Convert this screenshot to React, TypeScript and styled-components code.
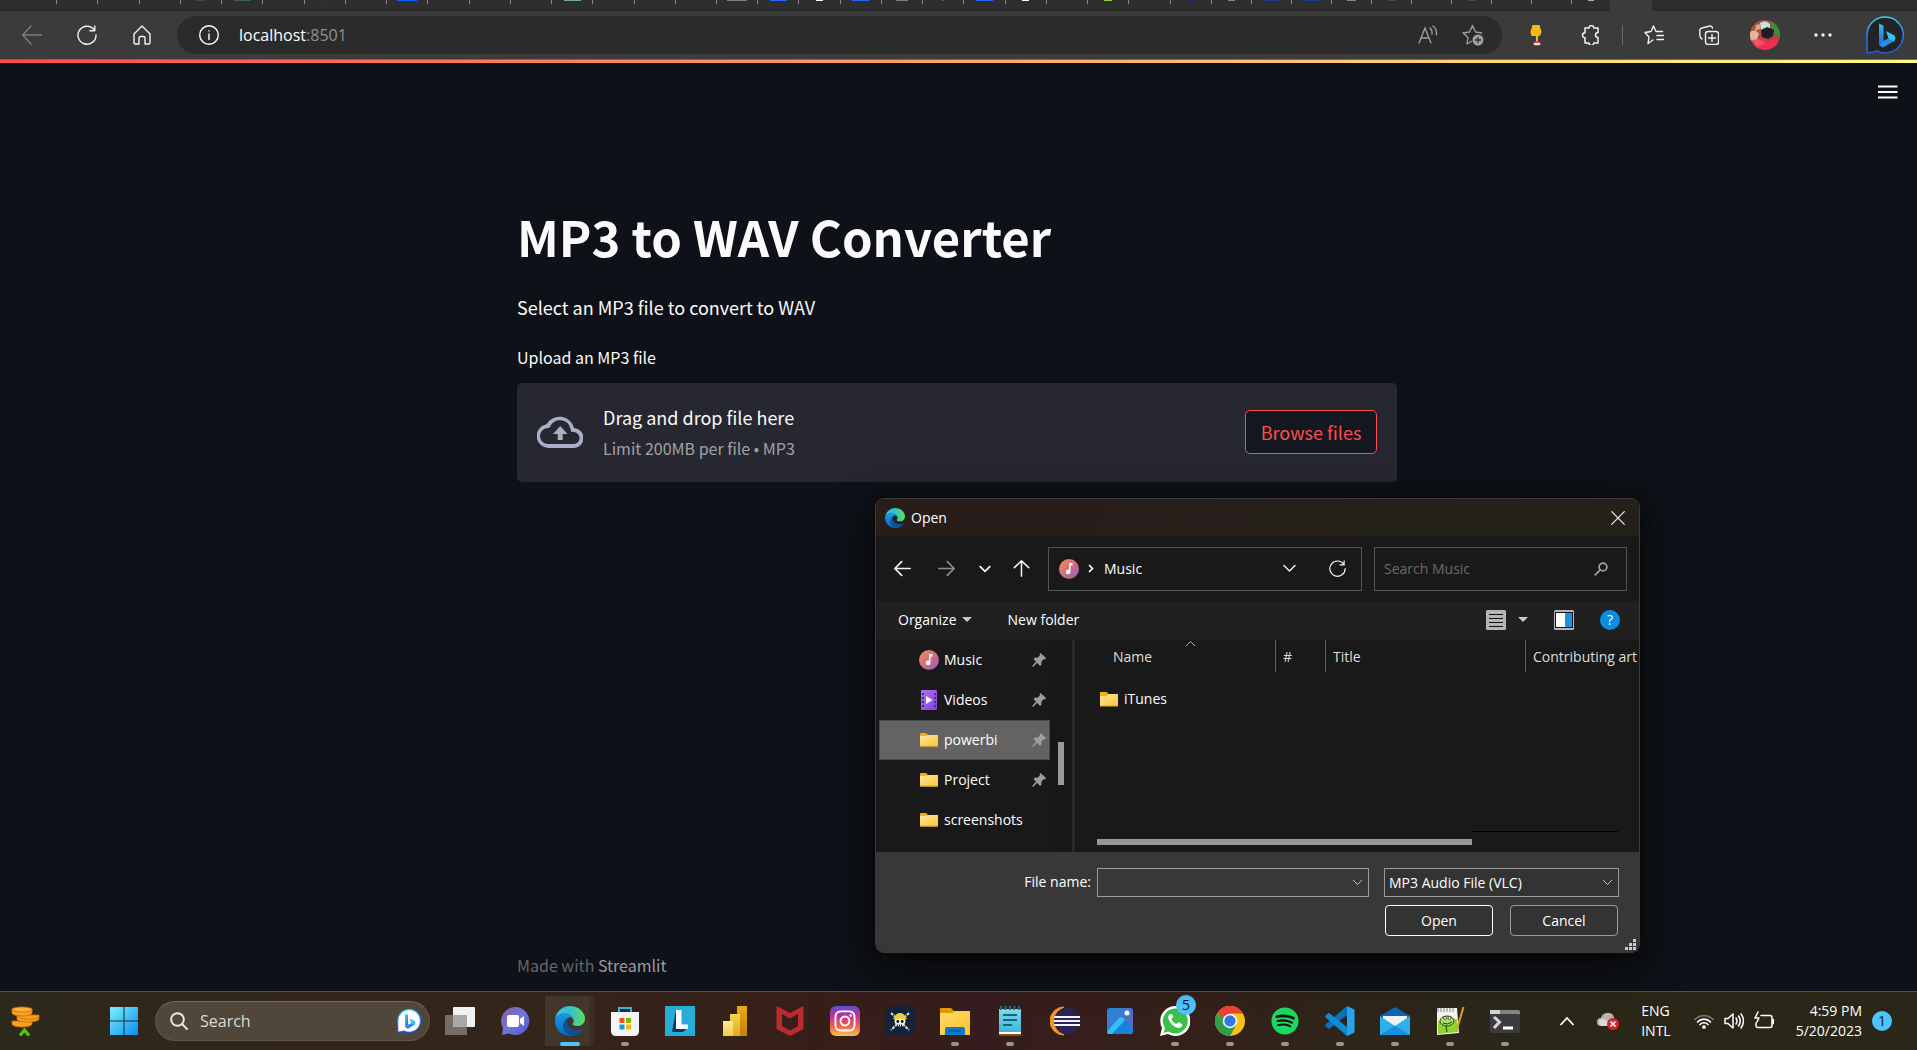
import React from "react";
import styled, { createGlobalStyle } from "styled-components";
import { FaInstagram, FaSpotify, FaWhatsapp } from "react-icons/fa";

const ui = `"Segoe UI", "Open Sans", "Noto Sans", sans-serif`;
const source = `"Noto Sans CJK JP", "Noto Sans CJK SC", "Open Sans", sans-serif`;

const GlobalStyle = createGlobalStyle`
  *, *::before, *::after { box-sizing: border-box; }
  body { margin: 0; background: #0e1117; font-family: ${ui}; color: #fff; }
  button, input, select { font: inherit; color: inherit; margin: 0; }
  svg { display: block; flex: none; }
`;

const Desktop = styled.div`
  position: relative;
  display: flex;
  flex-direction: column;
  min-height: 100vh;
  overflow: hidden;
`;

const Defs = styled.svg`
  position: absolute;
  width: 0;
  height: 0;
`;

/* ---------- browser chrome ---------- */

const TabStrip = styled.div`
  display: flex;
  height: 11px;
  background: #3b3b3b;
`;

const TabGroup = styled.div<{ $grow?: boolean; $radius?: string }>`
  display: flex;
  flex: ${(p) => (p.$grow ? "1" : "none")};
  background: #2e2e2e;
  border-bottom: 1px solid #272727;
  border-radius: ${(p) => p.$radius ?? "0"};
`;

const FirstGroup = styled(TabGroup)`
  padding-left: 16px;
`;

const Tab = styled.div<{ $width?: number; $last?: boolean }>`
  display: flex;
  justify-content: center;
  flex: ${(p) => (p.$width ? `0 0 ${p.$width}px` : "1")};
  &::after {
    content: "";
    width: ${(p) => (p.$last ? 0 : 1)}px;
    height: 4px;
    margin-left: auto;
    background: #858585;
  }
`;

const Favicon = styled.span<{ $color: string; $width: number }>`
  width: ${(p) => p.$width}px;
  height: 1px;
  margin-left: auto;
  background: ${(p) => p.$color};
`;

const ActiveTab = styled.div`
  width: 42px;
`;

const RestOfStrip = styled(TabGroup)`
  width: 265px;
`;

const Toolbar = styled.header`
  display: flex;
  align-items: center;
  height: 49px;
  padding-left: 4px;
  background: #3b3b3b;
  border-bottom: 1px solid #6b6b6b;
`;

const IconButton = styled.button<{ $width?: number; $color?: string }>`
  display: flex;
  align-items: center;
  justify-content: center;
  width: ${(p) => p.$width ?? 55}px;
  height: 38px;
  padding: 0;
  border: 0;
  background: none;
  color: ${(p) => p.$color ?? "#f2f2f2"};
`;

const AddressPill = styled.div`
  display: flex;
  align-items: center;
  flex: 1;
  height: 38px;
  margin: 0 6px 0 8px;
  padding: 0 7px 0 22px;
  gap: 20px;
  border-radius: 19px;
  background: #2b2b2b;
  font-size: 16px;
`;

const Url = styled.div`
  flex: 1;
  color: #fff;
`;

const Port = styled.span`
  color: #8f8f8f;
`;

const PillActions = styled.div`
  display: flex;
`;

const Divider = styled.div`
  display: flex;
  justify-content: center;
  width: 8px;
  &::before {
    content: "";
    width: 1px;
    height: 20px;
    background: #6a6a6a;
  }
`;

/* ---------- streamlit page ---------- */

const Page = styled.main`
  position: relative;
  display: flex;
  flex: 1;
  flex-direction: column;
  padding: 140px 3px 12px 0;
  background: #0e1117;
  color: #fafafa;
  font-family: ${source};
`;

const Decoration = styled.div`
  height: 3px;
  background: linear-gradient(90deg, #ff4b4b, #fffd80);
`;

const MenuButton = styled.button`
  position: absolute;
  top: 15px;
  right: 14px;
  display: grid;
  place-items: center;
  width: 30px;
  height: 28px;
  padding: 0;
  border: 0;
  background: none;
`;

const Block = styled.div`
  display: flex;
  flex: 1;
  flex-direction: column;
  width: 100%;
  max-width: 920px;
  margin: 0 auto;
  padding: 0 20px;
`;

const Title = styled.h1`
  margin: 0 0 22px;
  font-size: 49px;
  line-height: 66px;
  font-weight: 700;
`;

const Paragraph = styled.p`
  margin: 0 0 20px;
  font-size: 18px;
  line-height: 32px;
`;

const UploadLabel = styled.label`
  margin-bottom: 12px;
  font-size: 16px;
  line-height: 28px;
`;

const DropZone = styled.section`
  display: flex;
  align-items: center;
  height: 99px;
  padding: 0 20px 1px;
  border-radius: 5px;
  background: #262730;
`;

const DropText = styled.div`
  display: flex;
  flex-direction: column;
  flex: 1;
  margin-left: 20px;
  font-size: 18px;
  line-height: 32px;
`;

const DropHint = styled.small`
  font-size: 16px;
  line-height: 30px;
  color: #a0a1a5;
`;

const BrowseButton = styled.button`
  width: 132px;
  height: 44px;
  padding: 0;
  border: 1px solid #ff4b4b;
  border-radius: 5px;
  background: #131720;
  color: #ff4b4b;
  font-size: 18px;
  line-height: 32px;
`;

const HiddenFile = styled.input`
  display: none;
`;

const Footer = styled.footer`
  margin-top: auto;
  font-size: 16px;
  line-height: 28px;
  color: #65676c;
  a {
    color: #9b9ca0;
    text-decoration: none;
  }
`;

/* ---------- open dialog ---------- */

const Dialog = styled.div`
  position: absolute;
  left: 875px;
  top: 498px;
  display: flex;
  flex-direction: column;
  width: 765px;
  border: 1px solid #3c3b3c;
  border-radius: 9px;
  overflow: hidden;
  background: #191919;
  box-shadow: 0 12px 40px rgba(0, 0, 0, 0.6), 0 0 12px rgba(0, 0, 0, 0.3);
  font-size: 14px;
  line-height: 20px;
`;

const DialogTitle = styled.div`
  display: flex;
  align-items: center;
  height: 37px;
  padding-left: 9px;
  gap: 6px;
  background: linear-gradient(100deg, #291d1a 0%, #281d1a 30%, #25201a 58%, #24211b 100%);
`;

const CloseButton = styled(IconButton)`
  height: 36px;
  margin-left: auto;
`;

const NavRow = styled.div`
  display: flex;
  align-items: center;
  height: 65px;
  padding: 0 12px 0 4px;
`;

const PathBox = styled.div`
  display: flex;
  align-items: center;
  flex: 1;
  height: 44px;
  margin: 0 12px 0 8px;
  padding-left: 10px;
  border: 1px solid #535353;
  gap: 9px;
`;

const PathActions = styled.div`
  display: flex;
  margin-left: auto;
`;

const SearchBox = styled.div`
  display: flex;
  align-items: center;
  width: 253px;
  height: 44px;
  padding: 0 18px 0 9px;
  border: 1px solid #535353;
  input {
    flex: 1;
    min-width: 0;
    padding: 0;
    border: 0;
    outline: 0;
    background: none;
  }
  input::placeholder { color: #6b6b6b; opacity: 1; }
`;

const CommandRow = styled.div`
  display: flex;
  align-items: center;
  height: 39px;
  padding: 0 10px 0 22px;
  background: #202020;
  border-bottom: 1px solid #1c1c1c;
`;

const Command = styled.button`
  display: flex;
  align-items: center;
  padding: 0;
  gap: 5px;
  border: 0;
  margin-right: 36px;
  background: none;
`;

const CommandIcons = styled.div`
  display: flex;
  margin-left: auto;
`;

const Browser = styled.div`
  display: flex;
  height: 212px;
`;

const Places = styled.ul`
  width: 171px;
  margin: 0 0 0 3px;
  padding: 0;
  list-style: none;
`;

const Place = styled.li<{ $selected?: boolean }>`
  display: flex;
  align-items: center;
  height: 40px;
  padding: 0 3px 0 39px;
  gap: 5px;
  border: 1px solid ${(p) => (p.$selected ? "#4a4a4a" : "transparent")};
  background: ${(p) => (p.$selected ? "#636363" : "none")};
  svg:last-child { margin-left: auto; }
`;

const PlaceScroll = styled.div`
  width: 25px;
  padding: 102px 0 0 8px;
  border-right: 3px solid #282828;
  background: #171717;
  &::before {
    content: "";
    display: block;
    width: 6px;
    height: 43px;
    background: #9a9a9a;
  }
`;

const Files = styled.div`
  display: flex;
  flex: 1;
  flex-direction: column;
  min-width: 0;
  padding-left: 22px;
  overflow: hidden;
`;

const FileTable = styled.table`
  width: 600px;
  table-layout: fixed;
  border-collapse: separate;
  border-spacing: 0;
  th {
    position: relative;
    height: 32px;
    padding: 2px 0 0 7px;
    border-right: 1px solid #636363;
    text-align: left;
    font-weight: 400;
    color: #dedede;
    white-space: nowrap;
  }
  th:first-child { padding-left: 16px; }
  td { height: 54px; padding: 0 0 0 3px; }
`;

const SortMark = styled.svg`
  position: absolute;
  left: 88px;
  top: 0;
`;

const FileName = styled.span`
  display: flex;
  align-items: center;
  gap: 6px;
`;

const HScroll = styled.div`
  display: flex;
  height: 21px;
  margin: auto 21px 0 0;
`;

const HThumb = styled.div`
  flex: 375;
  height: 6px;
  margin-top: 8px;
  background: #979797;
`;

const HTrack = styled.div`
  flex: 146;
  height: 1px;
  background: #000;
`;

const DialogFooter = styled.div`
  position: relative;
  display: flex;
  flex-direction: column;
  height: 100px;
  padding: 16px 20px 0 0;
  gap: 8px;
  background: #383838;
`;

const FieldRow = styled.div`
  display: flex;
  justify-content: flex-end;
  align-items: flex-start;
  label { line-height: 28px; margin-right: 6px; }
`;

const Field = styled.div<{ $width: number }>`
  display: flex;
  align-items: center;
  width: ${(p) => p.$width}px;
  height: 29px;
  padding-right: 5px;
  border: 1px solid #9b9b9b;
  background: #383838;
  & + & { margin-left: 15px; background: #333; }
  input, select {
    flex: 1;
    min-width: 0;
    height: 27px;
    padding: 0 0 0 4px;
    border: 0;
    outline: 0;
    background: none;
    appearance: none;
  }
`;

const ButtonRow = styled.div`
  display: flex;
  justify-content: flex-end;
  padding-right: 1px;
  gap: 17px;
`;

const DialogButton = styled.button<{ $primary?: boolean }>`
  width: 108px;
  height: 31px;
  padding: 0;
  border: 1px solid ${(p) => (p.$primary ? "#fff" : "#9b9b9b")};
  border-radius: 4px;
  background: #333;
`;

const Grip = styled.svg`
  position: absolute;
  right: 3px;
  bottom: 2px;
`;

/* ---------- taskbar ---------- */

const Taskbar = styled.footer`
  display: flex;
  align-items: center;
  height: 59px;
  border-top: 1px solid #565150;
  background: linear-gradient(
    90deg,
    #2c291d 0%,
    #302719 10%,
    #34241a 30%,
    #371e18 44%,
    #351d1f 51%,
    #352019 62%,
    #2d251a 70%,
    #2a2719 80%,
    #2a2719 100%
  );
`;

const TaskButton = styled.button<{ $active?: boolean }>`
  position: relative;
  display: flex;
  align-items: center;
  justify-content: center;
  width: 55px;
  height: 50px;
  padding: 0;
  border: 0;
  border-radius: 5px;
  background: ${(p) =>
    p.$active
      ? "linear-gradient(90deg, transparent 3px, #42362a 3px 47px, #3b2f24 47px 52px, transparent 52px)"
      : "none"};
  svg { margin-bottom: 1px; }
`;

const Running = styled.span<{ $active?: boolean }>`
  position: absolute;
  bottom: 0;
  width: ${(p) => (p.$active ? 20 : 8)}px;
  height: 4px;
  border-radius: 2px;
  background: ${(p) => (p.$active ? "#4cc2ff" : "#9b9390")};
`;

const Badge = styled.span`
  position: absolute;
  top: -1px;
  right: 6px;
  width: 20px;
  border-radius: 50%;
  background: #4cc2ff;
  color: #111;
  font-size: 14px;
  line-height: 20px;
  text-align: center;
`;

const TaskSearch = styled.div`
  display: flex;
  align-items: center;
  width: 275px;
  height: 40px;
  margin: 0 2px 0 4px;
  padding: 0 8px 0 14px;
  gap: 12px;
  border: 1px solid #60554a;
  border-top-color: #74695e;
  border-radius: 20px;
  background: #50463a;
  font-size: 16px;
  input {
    flex: 1;
    min-width: 0;
    padding: 0;
    border: 0;
    outline: 0;
    background: none;
  }
  input::placeholder { color: #dcd9d5; opacity: 1; }
`;

const WidgetButton = styled(TaskButton)`
  width: 50px;
  margin-right: 46px;
`;

const Tray = styled.div`
  display: flex;
  align-items: center;
  margin-left: auto;
  padding-right: 25px;
  font-size: 14px;
  line-height: 20px;
`;

const TrayText = styled.div<{ $right?: boolean }>`
  display: flex;
  flex-direction: column;
  text-align: ${(p) => (p.$right ? "right" : "left")};
`;

const TrayIcons = styled.div`
  display: flex;
  gap: 10px;
  margin: 0 22px 0 23px;
`;

const Overflow = styled.div`
  display: flex;
  align-items: center;
  gap: 22px;
  margin-right: 22px;
`;

const Notice = styled.span`
  width: 20px;
  margin-left: 10px;
  border-radius: 50%;
  background: #4cc2ff;
  color: #111;
  text-align: center;
`;

/* ---------- drawings ---------- */

type Line = { size?: number; w?: number; children: React.ReactNode };
const Stroke = ({ size = 20, w = 1.4, children }: Line) => (
  <svg width={size} height={size} viewBox="0 0 20 20" fill="none" stroke="currentColor" strokeWidth={w} strokeLinecap="round" strokeLinejoin="round">
    {children}
  </svg>
);

const Art = ({ size = 30, children }: { size?: number; children: React.ReactNode }) => (
  <svg width={size} height={size} viewBox="0 0 30 30">{children}</svg>
);

const EdgeLogo = ({ size }: { size: number }) => (
  <svg width={size} height={size} viewBox="0 0 256 256">
    <path fill="url(#edgeDeep)" d="M235.7 195.5a93.7 93.7 0 0 1-10.6 4.7 101.9 101.9 0 0 1-35.9 6.4c-47.3 0-88.5-32.5-88.5-74.3a31.5 31.5 0 0 1 16.4-27.3c-42.8 1.8-53.8 46.4-53.8 72.5 0 74 68.1 81.4 82.8 81.4 7.9 0 19.8-2.3 27-4.6l1.3-.4a128.3 128.3 0 0 0 66.6-52.8 4 4 0 0 0-5.3-5.6z" />
    <path fill="url(#edgeBlue)" d="M105.7 241.4a79.2 79.2 0 0 1-22.7-21.3 80.7 80.7 0 0 1 29.5-120c3.2-1.5 8.5-4.1 15.6-4a32.4 32.4 0 0 1 25.7 13 31.9 31.9 0 0 1 6.3 18.7c0-.2 24.5-79.6-80-79.6-43.9 0-80 41.6-80 78.2a130.2 130.2 0 0 0 12.1 56 128 128 0 0 0 156.4 67 75.5 75.5 0 0 1-62.8-8z" />
    <path fill="url(#edgeGreen)" d="M152.3 148.9c-.9 1-3.4 2.5-3.4 5.6 0 2.6 1.7 5.2 4.8 7.3 14.3 10 41.4 8.6 41.5 8.6a59.6 59.6 0 0 0 30.3-8.3 61.4 61.4 0 0 0 30.4-52.9c.3-22.4-8-37.3-11.3-43.9C223.5 23.9 177.7 0 128 0A128 128 0 0 0 0 126.2c.5-36.5 36.8-66 80-66 3.5 0 23.5.3 42 10 16.3 8.6 24.9 19 30.8 29.2 6.2 10.7 7.3 24.2 7.3 29.6s-2.7 13.3-7.8 19.9z" />
  </svg>
);

const BingMark = ({ size, dark }: { size: number; dark?: boolean }) => (
  <svg width={size} height={size} viewBox="0 0 38 38">
    <path d="M19 1a18 18 0 1 1-8 34Q5 37 1 36.5 1.500 32 1 25V19A18 18 0 0 1 19 1z" fill={dark ? "#222324" : "#fff"} stroke="url(#bingRing)" strokeWidth={dark ? 1.6 : 2} />
    <path d="M13 7.500l4.500 2v15.500l-4.500 4z" fill="url(#bingStem)" />
    <path d="M13 29l4 2.500 11-6.500v-5l-11 5z" fill="#2b8cf0" />
    <path d="M20 15l8.500 4.500q2 3-.5 6l-5.500-3z" fill="#35c3f0" />
  </svg>
);

const MusicDisc = () => (
  <svg width="20" height="20" viewBox="0 0 20 20">
    <circle cx="10" cy="10" r="10" fill="url(#musicDisc)" />
    <path d="M10.200 4h3.300v2.500h-2v6.300a2.300 2.300 0 1 1-1.300-2z" fill="#fff" />
  </svg>
);

const VideoTile = () => (
  <svg width="20" height="20" viewBox="0 0 20 20">
    <rect x="2" width="16" height="20" rx="1" fill="url(#videoTile)" />
    <path d="M4 3v15M16 3v15" stroke="#4a2e86" strokeWidth="2" strokeDasharray="2 2" />
    <path d="M7 6l6.500 4L7 14z" fill="#fff" />
  </svg>
);

const Folder = () => (
  <svg width="20" height="20" viewBox="0 0 20 20">
    <path d="M1 4q0-1 1-1h5l2 2h9v10H1z" fill="#f5ad13" />
    <path d="M1 6h6l2-1h10v10.500q0 1-1 1H2q-1 0-1-1z" fill="url(#folder)" />
    <path d="M1 16h18" stroke="#e8a72a" />
  </svg>
);

const SmallFolder = () => (
  <svg width="18" height="15" viewBox="0 0 18 15">
    <path d="M0 0h6.500l2 2H17v10H0z" fill="#f9b115" />
    <path d="M0 4h6.500l2-2H18v12H0z" fill="url(#folder)" />
    <path d="M0 14h18" stroke="#e8a72a" />
  </svg>
);

const Pin = () => (
  <svg width="14" height="14" viewBox="0 0 14 14">
    <path d="M8.500 0l5.500 5-1.200 1.500-1.300-.2-2.200 2.500.2 2.500L8 13 5.200 9.800 1 14l-1-.8L4 8.500 1.500 6l1.500-1.500 2.600.2L8 2.200l-.4-1.300z" fill="#95a0a8" />
  </svg>
);

const Caret = () => (
  <svg width="10" height="6" viewBox="0 0 10 6"><path d="M0 0h10L5 5z" fill="#c9c9c9" /></svg>
);

const Chevron = () => (
  <svg width="11" height="7" viewBox="0 0 11 7" fill="none" stroke="#c0c0c0"><path d="M1 1l4.500 4.500L10 1" /></svg>
);

const Reload = ({ size }: { size: number }) => (
  <Stroke size={size}>
    <path d="M17.500 5.200A9 9 0 1 0 19 10M17.800 1v4.800h-4.900" />
  </Stroke>
);

const Magnifier = () => (
  <svg width="18" height="18" viewBox="0 0 18 18" fill="none" stroke="#e8e6e3" strokeWidth="2" strokeLinecap="round">
    <circle cx="7.500" cy="7.500" r="6.300" /><path d="M12 12l5 5" />
  </svg>
);

const art: Record<string, React.ReactNode> = {
  coins: (
    <Art>
      <g stroke="#d26a05" strokeWidth=".8" fill="#f99f22">
        <path d="M2 15v3c0 4 20 4 20 0v-3z" /><path d="M7 9v4c0 4 22 4 22 0V9z" /><path d="M2 3v4c0 4 20 4 20 0V3z" />
        <ellipse cx="12" cy="3.500" rx="10" ry="2.500" fill="#ffb13c" />
        <path d="M8 11c3 3 18 3 21 0" fill="none" />
      </g>
      <path d="M10 29.500l4.500-5.500 4.500 5.500" fill="none" stroke="#5cc312" strokeWidth="3.200" />
    </Art>
  ),
  start: (
    <Art>
      <path d="M1 1h13.500v13.500H1zM15.500 1h13.500v13.500H15.500zM1 15.500h13.500v13.500H1zM15.500 15.500h13.500v13.500H15.500z" fill="url(#winLogo)" />
    </Art>
  ),
  taskview: (
    <Art>
      <rect x="8" y="1" width="22" height="20" rx="1" fill="#f1f1f1" />
      <rect x="0" y="9" width="22" height="20" rx="1" fill="#77736f" opacity=".92" />
      <path d="M8 9h14v12H8z" fill="#aaa7a4" />
    </Art>
  ),
  chat: (
    <Art>
      <path d="M15 1a14 14 0 1 1-6 26.500L2 29l1-7A14 14 0 0 1 15 1z" fill="url(#chat)" />
      <rect x="7" y="9" width="12" height="12" rx="2" fill="#fff" /><path d="M20 13l4-3v10l-4-3z" fill="#fff" />
    </Art>
  ),
  edge: <EdgeLogo size={30} />,
  store: (
    <Art>
      <path d="M9 7V2h12v5" fill="none" stroke="#29b6f0" strokeWidth="2" />
      <path d="M1 6h28v19q0 5-5 5H6q-5 0-5-5z" fill="#f5f5f5" />
      <path d="M9.500 12h5v5h-5z" fill="#f05022" /><path d="M16 12h5v5h-5z" fill="#7fba00" />
      <path d="M9.500 18.500h5v5h-5z" fill="#00a4ef" /><path d="M16 18.500h5v5h-5z" fill="#ffb900" />
    </Art>
  ),
  lens: (
    <Art>
      <path d="M0 0h30v30H0z" fill="#25add8" /><path d="M11 4L7 26l5-3z" fill="#0d3558" />
      <path d="M7 26l5-3.500h10l-4 3.500z" fill="#0d3558" />
      <path d="M11 4h5.500v14.500h6.500V23H11z" fill="#fff" />
    </Art>
  ),
  powerbi: (
    <Art>
      <path d="M17 0h10v30H17z" fill="url(#pbiA)" /><path d="M10 8h10v22H10z" fill="url(#pbiB)" /><path d="M3 15h10v15H3z" fill="url(#pbiC)" />
    </Art>
  ),
  mcafee: (
    <Art>
      <path d="M1.500 0L15 7 28.500 0v23L15 30 1.500 23zM7 8v12l8 4.500 8-4.500V8l-8 4.500z" fill="#bd2a2d" fillRule="evenodd" />
    </Art>
  ),
  insta: (
    <Art>
      <rect width="30" height="30" rx="6" fill="url(#insta)" />
      <g transform="translate(3 3)"><FaInstagram size={24} color="#fff" /></g>
    </Art>
  ),
  pirate: (
    <Art>
      <rect width="30" height="30" rx="7" fill="#162238" />
      <path d="M6 7l18 17M24 7L6 24" stroke="#dcdcdc" strokeWidth="2" strokeDasharray="3 1" />
      <circle cx="15" cy="15" r="5.500" fill="#eee" /><path d="M9.500 12a5.500 5 0 0 1 11 0z" fill="#e6cf3e" /><path d="M8 12.500h14" stroke="#e6cf3e" />
      <circle cx="12.800" cy="15.500" r="1.400" fill="#111" /><circle cx="17.200" cy="15.500" r="1.400" fill="#111" /><path d="M12 19.500h6" stroke="#222" strokeDasharray="1 1" strokeWidth="2" />
    </Art>
  ),
  explorer: (
    <Art>
      <path d="M0 3q0-1 1-1h10l3 3h14v6H0z" fill="#e19c03" />
      <path d="M0 7h12l3-2h15v24H0z" fill="url(#folderBig)" />
      <path d="M5 29v-6q0-2 2-2h16q2 0 2 2v6z" fill="#1079c9" /><path d="M9 25h12" stroke="#07508f" strokeWidth="1.200" />
    </Art>
  ),
  notepad: (
    <Art>
      <path d="M4 3h22v24H4z" fill="url(#notepad)" /><path d="M4 27h22" stroke="#fff" strokeWidth="2" /><path d="M4 29h22" stroke="#b05c12" strokeWidth="1.500" />
      <path d="M6 0v4M10.500 0v4M15 0v4M19.500 0v4M24 0v4" stroke="#17728d" strokeWidth="2" />
      <path d="M8 9h14M8 14h14M8 19h9" stroke="#12677f" strokeWidth="2" />
    </Art>
  ),
  eclipse: (
    <Art>
      <path d="M14 1A14 14 0 0 0 14 29 15 15 0 0 1 14 1z" fill="#f7941e" stroke="#f7941e" />
      <circle cx="17" cy="15" r="13" fill="#2c2255" />
      <path d="M4 11h26M4 15h26M4 19h26" stroke="#f4f3f7" strokeWidth="2.200" />
    </Art>
  ),
  photos: (
    <Art>
      <rect x="2" y="2" width="26" height="26" rx="3" fill="url(#photos)" />
      <path d="M2 24L14 12q2-2 4 0l10 11v3q0 2-2 2H4q-2 0-2-2z" fill="#1583dc" /><path d="M4 28q-3-1-1-4L14 12q2-2 4 0l2 2L7 28z" fill="#38bff2" />
      <circle cx="22" cy="7" r="2.500" fill="#fff" />
    </Art>
  ),
  whatsapp: (
    <Art>
      <path d="M15 0a15 15 0 1 1-7 28L0 30l2-8A15 15 0 0 1 15 0z" fill="#fff" />
      <path d="M15 2.500a12.500 12.500 0 1 1-6.500 23L3.500 27l1.500-5A12.500 12.500 0 0 1 15 2.500z" fill="#3cbf4b" />
      <path d="M10 8q-2.500 2-1.500 5 3 7.500 10 9 3 0 4-3.500l-4-2.500-2 2q-4-1.500-5-5l1.800-2L12 8z" fill="#fff" />
    </Art>
  ),
  chrome: (
    <Art>
      <circle cx="15" cy="15" r="15" fill="#fbc116" />
      <path d="M15 15L2 7.500A15 15 0 0 1 28 7.500H15z" fill="#ea4335" />
      <path d="M2 7.500A15 15 0 0 0 15 30l6.500-11.500L8.500 19z" fill="#2f9e4b" />
      <path d="M8.500 18.700L2 7.500 15 15z" fill="#2f9e4b" />
      <circle cx="15" cy="15" r="7.200" fill="#fff" /><circle cx="15" cy="15" r="5.700" fill="#3577e5" />
    </Art>
  ),
  spotify: (
    <Art size={28}>
      <circle cx="15" cy="15" r="13" fill="#111" />
      <FaSpotify size={30} color="#1ed760" />
    </Art>
  ),
  vscode: (
    <Art>
      <path d="M22 0v9L4 23l-3.500-2.500v-2z" fill="#0a72bd" /><path d="M22 30v-9L4 7 .5 9.500v2z" fill="#0e8ad8" />
      <path d="M22 0l7.500 3.500v23L22 30z" fill="#27a3f0" />
    </Art>
  ),
  mail: (
    <Art>
      <path d="M0 10L15 1l15 9v4H0z" fill="#0b66b5" /><path d="M3 10h24v10H3z" fill="#f2f2f2" />
      <path d="M0 10l15 10 15-10v19H0z" fill="#2eb0f0" /><path d="M0 29l15-9.500L30 29z" fill="#1590dd" />
    </Art>
  ),
  npp: (
    <Art>
      <path d="M2 2h20l2 25-22 2z" fill="#f3f5ec" /><path d="M3 15l19-2 1 13-20 2z" fill="#8fd32c" />
      <path d="M3 2v4M6 2v4M9 2v4M12 2v4M15 2v4M18 2v4" stroke="#888" />
      <ellipse cx="12" cy="15" rx="7" ry="5" fill="#a9e35b" stroke="#2c4a14" /><circle cx="10" cy="12" r="1.500" fill="#fff" stroke="#222" strokeWidth=".7" /><circle cx="14.500" cy="12" r="1.500" fill="#fff" stroke="#222" strokeWidth=".7" />
      <path d="M8 17q4 2.500 9-1M11 20l1 6" stroke="#234" fill="none" />
      <path d="M28.500 1L22 23" stroke="#e29a24" strokeWidth="2" />
    </Art>
  ),
  terminal: (
    <Art>
      <rect y="4" width="30" height="23" rx="2" fill="#3c3c3e" /><path d="M0 8V6q0-2 2-2h26q2 0 2 2v2z" fill="#858585" /><path d="M0 4h10v4H0z" fill="#d2d2d2" />
      <path d="M4 11l5.500 5L4 22" fill="none" stroke="#d6d6d6" strokeWidth="3" /><path d="M13 22h10" stroke="#fff" strokeWidth="3" />
    </Art>
  ),
};

const apps: { id: string; label: string; state?: "active" | "running"; badge?: string }[] = [
  { id: "taskview", label: "Task view" },
  { id: "chat", label: "Chat" },
  { id: "edge", label: "Edge", state: "active" },
  { id: "store", label: "Store", state: "running" },
  { id: "lens", label: "Lens" },
  { id: "powerbi", label: "Power BI" },
  { id: "mcafee", label: "McAfee" },
  { id: "insta", label: "Instagram" },
  { id: "pirate", label: "Pirate" },
  { id: "explorer", label: "File Explorer", state: "running" },
  { id: "notepad", label: "Notepad", state: "running" },
  { id: "eclipse", label: "Eclipse" },
  { id: "photos", label: "Photos" },
  { id: "whatsapp", label: "WhatsApp", state: "running", badge: "5" },
  { id: "chrome", label: "Chrome", state: "running" },
  { id: "spotify", label: "Spotify", state: "running" },
  { id: "vscode", label: "VS Code", state: "running" },
  { id: "mail", label: "Mail", state: "running" },
  { id: "npp", label: "Notepad++", state: "running" },
  { id: "terminal", label: "Terminal", state: "running" },
];

type Fav = [string, number] | null;
const blue: Fav = ["#2a66f5", 17];
const violet: Fav = ["#2f2d48", 8];
const grey: Fav = ["#7d7d7d", 12];
const dim: Fav = ["#4b4b4b", 8];
const white: Fav = ["#ffffff", 7];
const navy: Fav = ["#1b3a84", 20];
const leftTabs: Fav[] = [
  null, null, null, null, dim, ["#40604f", 17], null, violet, null, ["#0a5fff", 20], violet, null, null, ["#70aa9b", 17],
  null, null, null, ["#808080", 20], blue, white, blue, grey, ["#556058", 2], blue, white, null, ["#8bd03c", 8], null, ["#22268a", 6],
];
const rightTabs: Fav[] = [["#888888", 7], navy, navy, ["#888888", 9], dim, violet, dim, violet, null];

const places = [
  { name: "Music", icon: <MusicDisc />, pinned: true },
  { name: "Videos", icon: <VideoTile />, pinned: true },
  { name: "powerbi", icon: <Folder />, pinned: true, selected: true },
  { name: "Project", icon: <Folder />, pinned: true },
  { name: "screenshots", icon: <Folder />, pinned: false },
];

const grad = (id: string, stops: string[], dir: "v" | "h" | "d" = "d") => (
  <linearGradient id={id} x1="0" y1="0" x2={dir === "v" ? "0" : "1"} y2={dir === "h" ? "0" : "1"}>
    {stops.map((c, i) => (
      <stop key={i} offset={i / (stops.length - 1)} stopColor={c} />
    ))}
  </linearGradient>
);

function BrowserChrome() {
  return (
    <>
      <TabStrip>
        <FirstGroup $grow>
          {leftTabs.map((f, i) => (
            <Tab key={i}>{f && <Favicon $color={f[0]} $width={f[1]} />}</Tab>
          ))}
        </FirstGroup>
        <TabGroup $radius="0 0 4px 0">
          {rightTabs.map((f, i) => (
            <Tab key={i} $width={40}>{f && <Favicon $color={f[0]} $width={f[1]} />}</Tab>
          ))}
          <Tab $width={38} $last><Favicon $color="#b0b0b0" $width={6} /></Tab>
        </TabGroup>
        <ActiveTab />
        <RestOfStrip $radius="0 0 0 4px" />
      </TabStrip>
      <Toolbar>
        <IconButton aria-label="Back" $color="#7d7d7d">
          <Stroke><path d="M19.500 10H.7M9 1L.7 10 9 19" /></Stroke>
        </IconButton>
        <IconButton aria-label="Refresh"><Reload size={20} /></IconButton>
        <IconButton aria-label="Home">
          <Stroke><path d="M2 9l8-8 8 8v8.500q0 1.500-1.500 1.500H13v-6q0-1.500-1.500-1.500h-3Q7 11.500 7 13v6H3.500Q2 19 2 17.500z" /></Stroke>
        </IconButton>
        <AddressPill>
          <Stroke><circle cx="10" cy="10" r="9.300" /><path d="M10 9v5.500M10 5.600v.3" /></Stroke>
          <Url>localhost<Port>:8501</Port></Url>
          <PillActions>
            <IconButton $width={45} $color="#a0a0a0" aria-label="Read aloud">
              <svg width="20" height="20" viewBox="0 0 20 20" fill="none" stroke="currentColor" strokeWidth="1.300" strokeLinecap="round">
                <path d="M1 18L7 3l6 15M3.300 13h7.500M12 3q2.500 2 2 6M15 1q4 3 3.500 9" />
              </svg>
            </IconButton>
            <IconButton $width={45} $color="#a0a0a0" aria-label="Add to favorites">
              <svg width="22" height="22" viewBox="0 0 22 22" fill="none" stroke="currentColor" strokeWidth="1.300" strokeLinejoin="round">
                <path d="M10 17l-5 3 1-6.500L1 9l6.500-1L10.500 1.500 13.500 8l6.500 1" />
                <circle cx="16" cy="16" r="5.500" fill="currentColor" stroke="none" /><path d="M16 13v6M13 16h6" stroke="#2b2b2b" />
              </svg>
            </IconButton>
          </PillActions>
        </AddressPill>
        <IconButton aria-label="Marker">
          <svg width="12" height="22" viewBox="0 0 12 22">
            <path d="M2.500 1h7l2 7-1.500 4H8v6H6v-6H1.500L.5 8z" fill="#fdb913" />
            <ellipse cx="7" cy="18.500" rx="3.500" ry="1.500" fill="#e8244e" /><ellipse cx="7" cy="20" rx="3.500" ry="1.300" fill="#eee" />
          </svg>
        </IconButton>
        <IconButton aria-label="Extensions">
          <Stroke w={1.500}><path d="M4 3h4a2.400 2.400 0 0 1 4.800 0H17v4.500a2.400 2.400 0 0 0 0 5V18h-4.200a2.400 2.400 0 0 1-4.800 0H4v-5.200a2.500 2.500 0 0 1 0-5z" /></Stroke>
        </IconButton>
        <Divider />
        <IconButton aria-label="Favorites">
          <Stroke><path d="M9 15l-5 3.500 1-6.500L1 7.500 7 6.500 9.500 1 12 6.500h6.500M13 10.500h6.500M13 14.500h6.500" /></Stroke>
        </IconButton>
        <IconButton aria-label="Collections">
          <Stroke><rect x="6.500" y="6.500" width="13" height="13" rx="2.500" /><path d="M13 9.500v7M9.500 13h7M3 14Q1 13 .8 10V5Q1 3.500 3 3l8-2q2-.3 2.500 2" /></Stroke>
        </IconButton>
        <IconButton aria-label="Profile" $width={57}>
          <Art>
            <clipPath id="avatar"><circle cx="15" cy="15" r="15" /></clipPath>
            <g clipPath="url(#avatar)">
              <path d="M0 0h30v30H0z" fill="#b5413c" /><path d="M0 0h12v14H0z" fill="#a8563f" /><path d="M20 0h10v18l-8-6z" fill="#3f8a3c" />
              <path d="M0 12q5-4 9 2l-3 8-6-2z" fill="#e9b49c" /><path d="M10 3q6-4 10 1v5l-9 1z" fill="#bfe3e6" />
              <path d="M3 22l8-4 8 3 9-2v11H3z" fill="#f02c55" /><path d="M11 10l6-3 7 3-1 6-5 3-6-2z" fill="#1b1d24" />
              <path d="M2 20l7-1 6 4-8 4z" fill="#f25668" /><path d="M6 5l5-1-1 5-5 2z" fill="#e2a085" />
            </g>
          </Art>
        </IconButton>
        <IconButton aria-label="Settings" $width={59}>
          <svg width="18" height="4" viewBox="0 0 18 4" fill="#f2f2f2"><circle cx="2" cy="2" r="1.700" /><circle cx="9" cy="2" r="1.700" /><circle cx="16" cy="2" r="1.700" /></svg>
        </IconButton>
        <IconButton aria-label="Bing" $width={65}><BingMark size={38} dark /></IconButton>
      </Toolbar>
    </>
  );
}

function ConverterPage() {
  return (
    <Page>
      <MenuButton aria-label="Menu">
        <svg width="20" height="14" viewBox="0 0 20 14" stroke="#fafafa" strokeWidth="2"><path d="M0 1.500h19.500M0 7h19.500M0 12.500h19.500" /></svg>
      </MenuButton>
      <Block>
        <Title>MP3 to WAV Converter</Title>
        <Paragraph>Select an MP3 file to convert to WAV</Paragraph>
        <UploadLabel htmlFor="upload">Upload an MP3 file</UploadLabel>
        <DropZone>
          <HiddenFile id="upload" type="file" accept=".mp3" />
          <svg width="46" height="32" viewBox="0 0 46 32">
            <path d="M37 12A15 15 0 0 0 9.500 8.200 12 12 0 0 0 11.500 32H36a10 10 0 0 0 1-20zM36 28H11.500A8 8 0 0 1 10.500 12l2-.2 1-2a10.800 10.800 0 0 1 20 3l.6 3 3 .2A6 6 0 0 1 36 28z" fill="#a9afc6" />
            <path d="M16 18h4.700v6h5v-6H30.500l-7.300-8z" fill="#a9afc6" />
          </svg>
          <DropText>
            <span>Drag and drop file here</span>
            <DropHint>Limit 200MB per file • MP3</DropHint>
          </DropText>
          <BrowseButton>Browse files</BrowseButton>
        </DropZone>
        <Footer>Made with <a href="#streamlit">Streamlit</a></Footer>
      </Block>
    </Page>
  );
}

function OpenDialog() {
  return (
    <Dialog role="dialog" aria-label="Open">
      <DialogTitle>
        <EdgeLogo size={20} />
        <span>Open</span>
        <CloseButton $width={43} aria-label="Close">
          <Stroke size={14} w={1.700}><path d="M1 1l18 18M19 1L1 19" /></Stroke>
        </CloseButton>
      </DialogTitle>
      <NavRow>
        <IconButton $width={44} aria-label="Back"><Stroke size={17} w={2}><path d="M19 10H1M9 2l-8 8 8 8" /></Stroke></IconButton>
        <IconButton $width={44} $color="#8f8f8f" aria-label="Forward"><Stroke size={17} w={2}><path d="M1 10h18M11 2l8 8-8 8" /></Stroke></IconButton>
        <IconButton $width={34} aria-label="Recent"><Stroke size={12} w={3}><path d="M2 6l8 8 8-8" /></Stroke></IconButton>
        <IconButton $width={38} aria-label="Up"><Stroke size={17} w={1.800}><path d="M10 19V1M1.500 9L10 1l8.500 8" /></Stroke></IconButton>
        <PathBox>
          <MusicDisc />
          <svg width="7" height="9" viewBox="0 0 7 9" fill="none" stroke="#fff" strokeWidth="1.700"><path d="M1 1l3.500 3.500L1 8" /></svg>
          <span>Music</span>
          <PathActions>
            <IconButton $width={47} aria-label="Previous locations"><Stroke size={13} w={2.200}><path d="M1.500 5.500L10 14l8.500-8.500" /></Stroke></IconButton>
            <IconButton $width={48} aria-label="Refresh"><Reload size={17} /></IconButton>
          </PathActions>
        </PathBox>
        <SearchBox>
          <input aria-label="Search Music" placeholder="Search Music" />
          <svg width="14" height="14" viewBox="0 0 14 14" fill="none" stroke="#a0a0a0" strokeWidth="1.700"><circle cx="9" cy="5" r="3.900" /><path d="M6.200 7.800L.7 13.300" /></svg>
        </SearchBox>
      </NavRow>
      <CommandRow>
        <Command>Organize <Caret /></Command>
        <Command>New folder</Command>
        <CommandIcons>
          <IconButton $width={26} aria-label="View">
            <svg width="20" height="20" viewBox="0 0 20 20"><rect width="20" height="20" rx="1.500" fill="#b5b5b5" /><path d="M3 4.500h14M3 8.500h14M3 12.500h14M3 16.500h14" stroke="#111" /></svg>
          </IconButton>
          <IconButton $width={27} aria-label="More views"><Caret /></IconButton>
          <IconButton $width={55} aria-label="Preview pane">
            <svg width="20" height="20" viewBox="0 0 20 20"><rect width="20" height="20" rx="1.500" fill="#b5b5b5" /><path d="M1 2h18v16H1z" fill="#111" /><path d="M2 3h9v14H2z" fill="#fff" /><path d="M11 3h7v14h-7z" fill="#1795e0" /></svg>
          </IconButton>
          <IconButton $width={38} aria-label="Help">
            <svg width="20" height="20" viewBox="0 0 20 20"><circle cx="10" cy="10" r="10" fill="#0c8ee0" /><text x="10" y="15" fontSize="14" textAnchor="middle" fill="#fff">?</text></svg>
          </IconButton>
        </CommandIcons>
      </CommandRow>
      <Browser>
        <Places>
          {places.map((p) => (
            <Place key={p.name} $selected={p.selected}>
              {p.icon}
              <span>{p.name}</span>
              {p.pinned && <Pin />}
            </Place>
          ))}
        </Places>
        <PlaceScroll />
        <Files>
          <FileTable>
            <colgroup><col width="179" /><col width="50" /><col width="200" /><col width="171" /></colgroup>
            <thead>
              <tr>
                <th>
                  Name
                  <SortMark width="11" height="7" viewBox="0 0 11 7" fill="none" stroke="#b0b0b0"><path d="M1 6l4.500-4.500L10 6" /></SortMark>
                </th>
                <th>#</th>
                <th>Title</th>
                <th>Contributing art</th>
              </tr>
            </thead>
            <tbody>
              <tr><td colSpan={4}><FileName><SmallFolder />iTunes</FileName></td></tr>
            </tbody>
          </FileTable>
          <HScroll><HThumb /><HTrack /></HScroll>
        </Files>
      </Browser>
      <DialogFooter>
        <FieldRow>
          <label htmlFor="filename">File name:</label>
          <Field $width={272}><input id="filename" type="text" /><Chevron /></Field>
          <Field $width={235}>
            <select aria-label="File type" defaultValue="mp3"><option value="mp3">MP3 Audio File (VLC)</option></select>
            <Chevron />
          </Field>
        </FieldRow>
        <ButtonRow>
          <DialogButton $primary>Open</DialogButton>
          <DialogButton>Cancel</DialogButton>
        </ButtonRow>
        <Grip width="11" height="11" viewBox="0 0 11 11" fill="#c9c9c9">
          <path d="M8 0h3v3H8zM4 4h3v3H4zM8 4h3v3H8zM0 8h3v3H0zM4 8h3v3H4zM8 8h3v3H8z" />
        </Grip>
      </DialogFooter>
    </Dialog>
  );
}

function WindowsTaskbar() {
  return (
    <Taskbar>
      <WidgetButton aria-label="Widgets">{art.coins}</WidgetButton>
      <TaskButton aria-label="Start">{art.start}</TaskButton>
      <TaskSearch>
        <Magnifier />
        <input aria-label="Search" placeholder="Search" />
        <BingMark size={24} />
      </TaskSearch>
      {apps.map((a) => (
        <TaskButton key={a.id} aria-label={a.label} $active={a.state === "active"}>
          {art[a.id]}
          {a.badge && <Badge>{a.badge}</Badge>}
          {a.state && <Running $active={a.state === "active"} />}
        </TaskButton>
      ))}
      <Tray>
        <Overflow>
          <svg width="16" height="10" viewBox="0 0 16 10" fill="none" stroke="#fff" strokeWidth="1.800"><path d="M1.500 9L8 2l6.500 7" /></svg>
          <svg width="22" height="18" viewBox="0 0 22 18">
            <path d="M4 14a4 4 0 0 1 0-8 7 7 0 0 1 12-3l2 5-8 6z" fill="#b5b3ae" /><path d="M4 14a4 4 0 0 1 1-7.500l9 4-2 3.500z" fill="#dcdad6" />
            <circle cx="16" cy="12" r="6" fill="#d6232c" /><path d="M13.500 9.500l5 5M18.500 9.500l-5 5" stroke="#fff" strokeWidth="1.700" />
          </svg>
        </Overflow>
        <TrayText><span>ENG</span><span>INTL</span></TrayText>
        <TrayIcons>
          <Stroke w={1.700}><path d="M1 8.500a12.500 12.500 0 0 1 18 0" stroke="#77746a" /><path d="M3.500 11a9 9 0 0 1 13 0M6 13.500a5.500 5.500 0 0 1 8 0" /><circle cx="10" cy="16" r="1" fill="currentColor" /></Stroke>
          <Stroke w={1.500}><path d="M1 7.500h3L9 3v14l-5-4.500H1zM12 7q2 3 0 6M14.500 5q3.500 5 0 10M17 3q5 7 0 14" /></Stroke>
          <Stroke w={1.500}><path d="M7 4.500h9q2 0 2 2v8q0 2-2 2H4q-2 0-2-2V12M19.300 8.500v4M4 1L1 7h4L3 11" /></Stroke>
        </TrayIcons>
        <TrayText $right><span>4:59 PM</span><span>5/20/2023</span></TrayText>
        <Notice>1</Notice>
      </Tray>
    </Taskbar>
  );
}

export default function App() {
  return (
    <Desktop>
      <GlobalStyle />
      <Defs aria-hidden="true">
        <defs>
          {grad("edgeDeep", ["#0c59a4", "#114a8b"])}
          {grad("edgeBlue", ["#1b9de2", "#1383d6", "#0667c8"], "v")}
          {grad("edgeGreen", ["#35c1f1", "#34c1c9", "#5be05f"], "h")}
          {grad("bingRing", ["#35d0f0", "#2b7bea", "#2456d8"], "v")}
          {grad("bingStem", ["#3db8f5", "#2465e0"], "v")}
          {grad("musicDisc", ["#f5915a", "#d06f7d", "#8f58c8"])}
          {grad("videoTile", ["#b96cf0", "#7a46e0"])}
          {grad("folder", ["#ffe59a", "#fcc63c"])}
          {grad("folderBig", ["#ffda6b", "#fbc22d"])}
          {grad("winLogo", ["#7af1ff", "#3fc0f8", "#0a8df0"])}
          {grad("chat", ["#8a5a9a", "#6f78d8", "#5350c8"])}
          {grad("pbiA", ["#e8ad10", "#c57f0c"], "v")}
          {grad("pbiB", ["#f5d44c", "#e4a91a"], "v")}
          {grad("pbiC", ["#fbeb9a", "#f2cc45"], "v")}
          {grad("insta", ["#5a50d0", "#c0309a", "#f0604a", "#fcc050"], "v")}
          {grad("notepad", ["#83d9ea", "#3fb5d6"], "v")}
          {grad("photos", ["#1c8be0", "#6a5fb8"])}
        </defs>
      </Defs>
      <BrowserChrome />
      <Decoration />
      <ConverterPage />
      <WindowsTaskbar />
      <OpenDialog />
    </Desktop>
  );
}
